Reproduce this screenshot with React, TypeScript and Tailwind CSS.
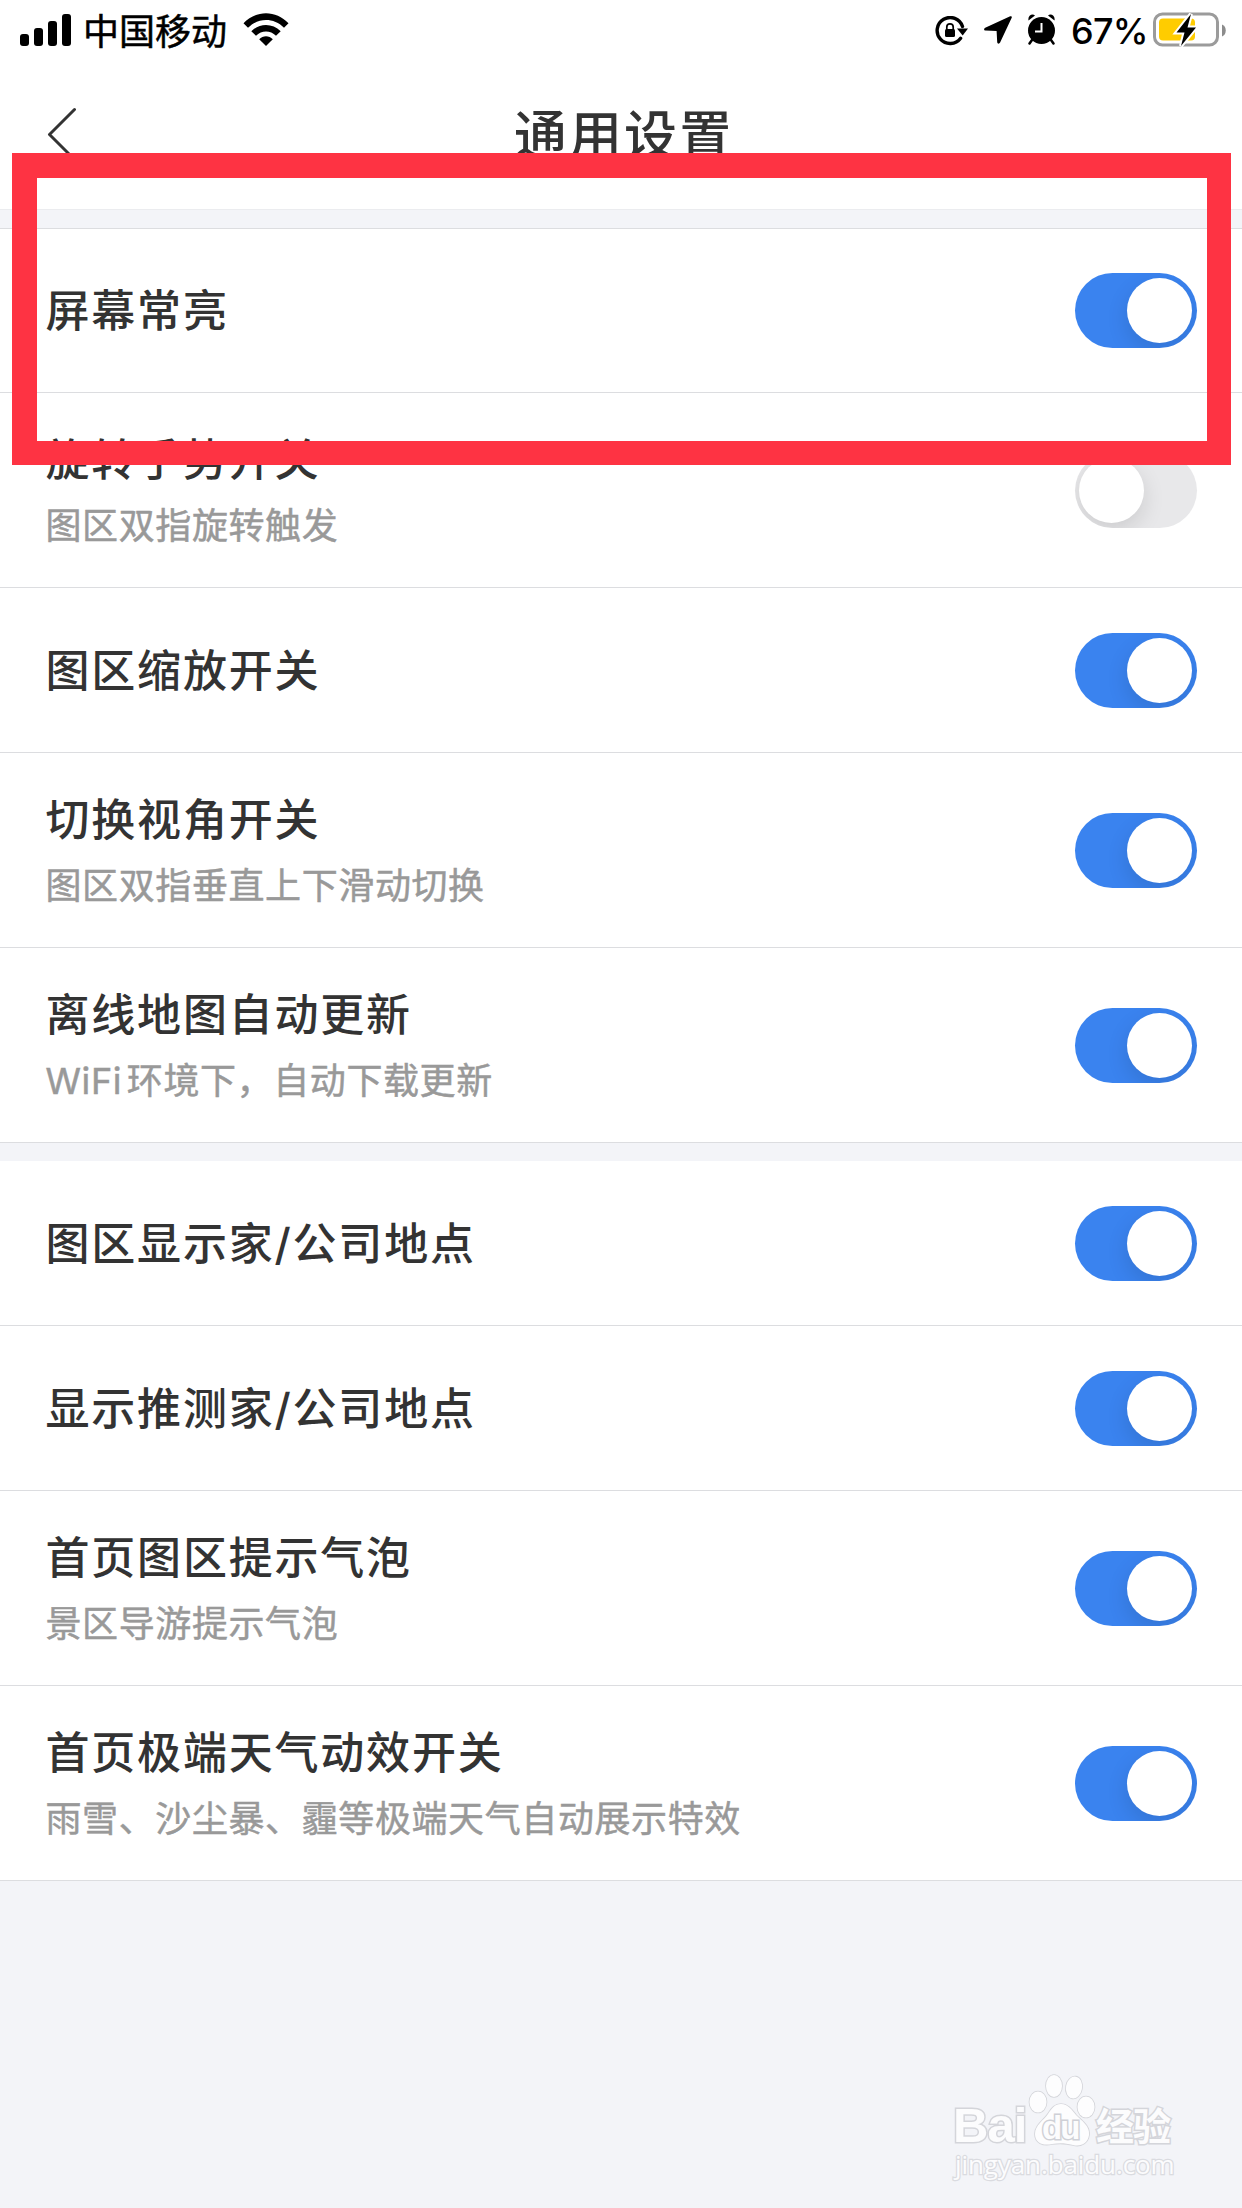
import React from "react";

interface Setting {
  title: string;
  desc?: string;
  on: boolean;
  height: string;
}

const mapSettings: Setting[] = [
  { title: "屏幕常亮", on: true, height: "h-[164px]" },
  { title: "旋转手势开关", desc: "图区双指旋转触发", on: false, height: "h-[195px]" },
  { title: "图区缩放开关", on: true, height: "h-[165px]" },
  { title: "切换视角开关", desc: "图区双指垂直上下滑动切换", on: true, height: "h-[195px]" },
  { title: "离线地图自动更新", desc: "WiFi 环境下，自动下载更新", on: true, height: "h-[195px]" },
];

const homeSettings: Setting[] = [
  { title: "图区显示家/公司地点", on: true, height: "h-[165px]" },
  { title: "显示推测家/公司地点", on: true, height: "h-[165px]" },
  { title: "首页图区提示气泡", desc: "景区导游提示气泡", on: true, height: "h-[195px]" },
  { title: "首页极端天气动效开关", desc: "雨雪、沙尘暴、霾等极端天气自动展示特效", on: true, height: "h-[195px]" },
];

const Toggle = ({ on }: { on: boolean }) => (
  <div
    className={
      on
        ? "w-[122px] h-[75px] rounded-full bg-[#3a83ef] overflow-hidden flex items-center justify-end px-[5px]"
        : "w-[122px] h-[75px] rounded-full bg-[#e8e8ea] overflow-hidden flex items-center justify-start px-1"
    }
  >
    <div className="size-[65px] rounded-full bg-white shadow-[0_8px_22px_rgba(0,0,0,0.12)]" />
  </div>
);

const Row = ({ title, desc, on, height }: Setting) => (
  <div
    className={`${height} flex items-center justify-between bg-white border-b border-[#dcdde0] pl-[45.500px] pr-[45px]`}
  >
    <div>
      <div
        className={
          desc
            ? "text-[44px] leading-[63px] tracking-[1.8px] font-medium text-[#333333]"
            : "pt-[2px] text-[44px] leading-[63px] tracking-[1.8px] font-medium text-[#333333]"
        }
      >
        {title}
      </div>
      {desc && (
        <div className="mt-[9px] mb-[1px] text-[36px] leading-[50px] tracking-[0.6px] [word-spacing:-6px] text-[#999999] [-webkit-text-stroke:0.5px_#999999]">
          {desc}
        </div>
      )}
    </div>
    <Toggle on={on} />
  </div>
);

const StatusBar = () => (
  <div className="h-[60px] flex items-center justify-between pl-5 pr-[16px] text-black">
    <div className="flex items-center">
      <svg width="51" height="32" viewBox="0 0 51 32">
        <rect x="0" y="20" width="9" height="12" rx="3" />
        <rect x="14" y="14" width="9" height="18" rx="3" />
        <rect x="28" y="7" width="9" height="25" rx="3" />
        <rect x="42" y="0" width="9" height="32" rx="3" />
      </svg>
      <span className="ml-[12px] pt-[3px] w-[147px] text-[36px] leading-[60px] [-webkit-text-stroke:0.5px_black]">
        中国移动
      </span>
      <svg className="ml-[13px] mb-[2px]" width="46" height="33" viewBox="0 0 46 33">
        <path d="M0.5 10.2C13 -3.2 33 -3.2 45.5 10.2L41 14.8C31 4.5 15 4.5 5 14.8Z" />
        <path d="M8.3 18.3C16.5 9.8 29.5 9.8 37.7 18.3L33 22.8C27.5 17 18.5 17 13 22.8Z" />
        <path d="M16.2 26.3C20 22.3 26 22.3 29.8 26.3L23 33Z" />
      </svg>
    </div>
    <div className="flex items-center">
      <svg className="mt-[2px]" width="33" height="30" viewBox="0 0 33 30">
        <path
          d="M27.5 10.5A13 13 0 1 0 25.6 22.3"
          fill="none"
          stroke="black"
          strokeWidth="3.4"
          strokeLinecap="round"
        />
        <path d="M22 12.5H33L27.7 19.5Z" />
        <rect x="10" y="13" width="10" height="8" rx="1.5" />
        <path d="M11.8 14V11a3.2 3.2 0 0 1 6.4 0V14" fill="none" stroke="black" strokeWidth="1.7" />
      </svg>
      <svg className="ml-[16px]" width="28" height="28" viewBox="0 0 28 28">
        <path d="M26.2 0.3 1.2 11.7C-0.5 12.6 -0.2 14.5 1.6 14.6L12.6 15 13.2 26C13.3 28 15.3 28.2 16.1 26.6L27.7 1.8C28.2 0.6 27.5 -0.2 26.2 0.3Z" />
      </svg>
      <svg className="ml-[15px] mb-px" width="29" height="31" viewBox="0 0 29 31">
        <circle cx="14.5" cy="16.5" r="13.5" />
        <path
          d="M1.5 6.5C0.5 2 5 -1 8 1.5ZM27.5 6.5C28.5 2 24 -1 21 1.5Z"
          stroke="white"
          strokeWidth="1.5"
          paintOrder="stroke"
        />
        <path d="M5 26 2.5 29.5M24 26 26.5 29.5" stroke="black" strokeWidth="2.5" strokeLinecap="round" />
        <path d="M14.5 9V17.5H8" fill="none" stroke="white" strokeWidth="2" />
      </svg>
      <span className="ml-[15px] pt-[2px] w-[77px] whitespace-nowrap text-[36px] leading-[60px] tracking-[-0.8px] font-medium">
        67%
      </span>
      <svg className="ml-[5px]" width="73" height="36" viewBox="0 0 73 36">
        <rect x="1.5" y="2" width="63" height="31" rx="8" fill="none" stroke="#9b9b9b" strokeWidth="3" />
        <path d="M69 12.5C74 14 74 23 69 24.5Z" fill="#8c8c8c" />
        <rect x="6" y="6.5" width="36" height="22" rx="4" fill="#ffcc00" />
        <path
          d="M38 2 23.5 20.5H31.5L28 34 43 15.5H34.5Z"
          stroke="white"
          strokeWidth="4"
          paintOrder="stroke"
        />
      </svg>
    </div>
  </div>
);

const Watermark = () => (
  <div className="absolute left-[952px] top-[2070px] w-[230px] text-[#fcfcfd] [-webkit-text-stroke:3px_#d4d5da] [paint-order:stroke_fill]">
    <div className="relative h-[80px]">
      <span className="absolute left-[1px] top-[30px] font-['Liberation_Sans'] text-[49px] leading-[50px] font-bold tracking-[-1px]">
        Bai
      </span>
      <svg className="absolute left-[76px] top-[4px]" width="68" height="74" viewBox="0 0 68 74">
        <g fill="#fdfdfe" stroke="#d4d5da" strokeWidth="1.7">
          <ellipse cx="10" cy="28" rx="8.5" ry="10.5" />
          <ellipse cx="26" cy="12" rx="8" ry="11" />
          <ellipse cx="46" cy="13.5" rx="8" ry="11" transform="rotate(10 46 13.5)" />
          <ellipse cx="58" cy="33" rx="8.5" ry="10.5" />
          <path d="M33 30C40 30 44 36 48 41C54 47 62 52 61 61C60 69 53 73 45 71C37 69 31 69 24 70C15 72 7 69 7 60C7 51 16 46 20 40C24 34 27 30 33 30Z" />
        </g>
      </svg>
      <span className="absolute left-[90px] top-[38px] font-['Liberation_Sans'] text-[33px] leading-[40px] font-bold tracking-[-2px] [-webkit-text-stroke:3px_#cfd0d6]">
        du
      </span>
      <span className="absolute left-[144px] top-[33px] text-[38px] leading-[46px] font-bold tracking-[-1px]">
        经验
      </span>
    </div>
    <div className="pl-[3px] font-['Open_Sans'] text-[26px] leading-[28px] tracking-[-0.1px] whitespace-nowrap [-webkit-text-stroke:2.5px_#dadbe0]">
      jingyan.baidu.com
    </div>
  </div>
);

const App = () => {
  return (
    <div className="relative w-[1242px] h-[2208px] overflow-hidden bg-[#f3f4f8] font-['Inter','Noto_Sans_CJK_SC',sans-serif]">
      <div className="h-[209px] bg-white">
        <StatusBar />
        <div className="h-[149px] grid grid-cols-3 items-start pt-[34px]">
          <svg className="ml-[47px] mt-[13px]" width="30" height="54" viewBox="0 0 30 54">
            <path
              d="M27.5 2.5 2.5 27.5 27.5 52.5"
              fill="none"
              stroke="#333333"
              strokeWidth="3"
              strokeLinecap="round"
              strokeLinejoin="round"
            />
          </svg>
          <h1 className="pt-[4px] pl-[6px] text-center text-[53px] leading-[76px] tracking-[2px] font-medium text-[#333333]">
            通用设置
          </h1>
        </div>
      </div>
      <div className="h-5 border-t border-b border-t-[#ebecef] border-b-[#dcdde0]" />
      {mapSettings.map((item) => (
        <Row key={item.title} {...item} />
      ))}
      <div className="h-[18px]" />
      {homeSettings.map((item) => (
        <Row key={item.title} {...item} />
      ))}

      {/* highlight frame over the first setting */}
      <div className="absolute left-[12px] top-[153px] w-[1219px] h-[312px] border-[25px] border-r-[24px] border-b-[24px] border-[#fe3343]" />
      <Watermark />
    </div>
  );
};

export default App;
